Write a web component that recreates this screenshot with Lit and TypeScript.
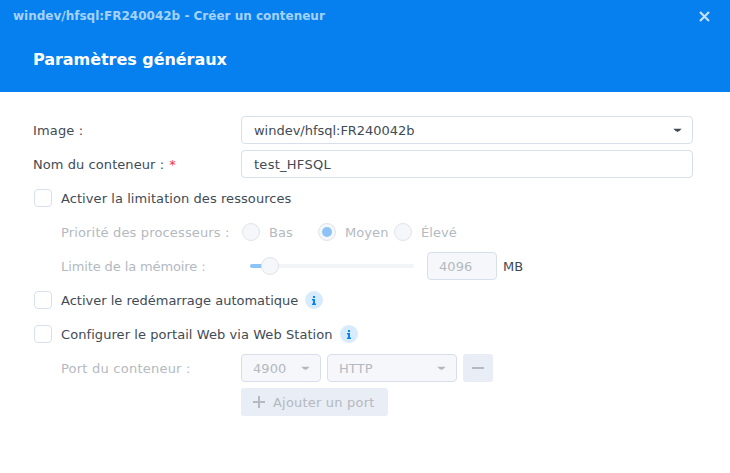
import { LitElement, html, css } from "lit";
import { customElement } from "lit/decorators.js";

const caret = html`<svg class="caret" width="9" height="5" viewBox="0 0 10 6"><path d="M0 1h10L7 4H6L5 5 4 4H3z" fill="currentColor"/></svg>`;
const info = html`<span class="info"><svg width="4" height="9" viewBox="0 0 4 9"><path d="M1 0h2v2H1zM0 3h3v4.500h1V9H0V7.500h1V4.500H0z" fill="#0a84ee"/></svg></span>`;

@customElement("app-root")
export class AppRoot extends LitElement {
  static styles = css`
    :host { display: block; width: 730px; height: 473px; background: #fff; overflow: hidden;
      font-family: "DejaVu Sans", Verdana, sans-serif; font-size: 13px; letter-spacing: 0.07px; color: #414b55; }
    .head { height: 92px; background: #0580ee; box-sizing: border-box; display: flex; flex-direction: column; }
    .bar { height: 32px; display: flex; align-items: center; justify-content: space-between; padding: 0 20px 0 13px; font-size: 12px; letter-spacing: 0; font-weight: 700; color: #a6d2fa; }
    .bar svg { display: block; }
    .title { margin: 12px 0 0 33px; font-size: 16px; line-height: 32px; letter-spacing: -0.05px; font-weight: 700; color: #fff; }
    .body { padding: 24px 37px 0 33px; display: flex; flex-direction: column; gap: 6px; }
    .row { height: 28px; display: flex; align-items: center; }
    .label { width: 208px; flex: none; }
    .sub { width: 180px; margin-left: 28px; flex: none; }
    .dim { color: #b4b9bf; }
    .req { color: #f0323c; margin-left: 5px; }
    .field { box-sizing: border-box; height: 28px; border: 1px solid #d7e0ea; border-radius: 4px; padding: 0 12px; display: flex; align-items: center; justify-content: space-between; background: #fff; }
    .wide { width: 452px; }
    .caret { color: #414b55; display: block; margin-right: -2px; }
    .off { background: #f5f7fa; color: #b4b9bf; padding: 0 11px; }
    .off .caret { color: #b4b9bf; margin-right: -1px; }
    .box { box-sizing: border-box; width: 18px; height: 18px; border: 1px solid #d7e0ea; border-radius: 4px; margin: 0 9px 0 1px; flex: none; }
    .info { width: 18px; height: 18px; border-radius: 50%; background: #d8ebfc; margin-left: 7px; display: flex; align-items: center; justify-content: center; }
    .opts { display: flex; margin-left: 1px; }
    .opt { width: 76px; display: flex; align-items: center; gap: 9px; }
    .radio { box-sizing: border-box; width: 18px; height: 18px; border-radius: 50%; border: 1px solid #dfe4ea; background: #f5f7fa; flex: none; display: flex; align-items: center; justify-content: center; }
    .radio i { width: 10px; height: 10px; border-radius: 50%; background: #8cc4f8; display: block; }
    .slider { width: 164px; margin-left: 9px; height: 4px; border-radius: 2px; background: #f3f4f6; position: relative; flex: none; }
    .slider b { display: block; width: 14px; height: 4px; border-radius: 2px; background: #8cc4f8; }
    .slider i { position: absolute; left: 11px; top: -7px; box-sizing: border-box; width: 18px; height: 18px; border-radius: 50%; border: 1px solid #dfe4ea; background: #f5f7fa; }
    .num { width: 70px; margin-left: 13px; }
    .mb { margin-left: 6px; color: #414b55; }
    .gap6 { margin-left: 6px; }
    .port { width: 80px; }
    .proto { width: 130px; }
    .btn { box-sizing: border-box; height: 28px; background: #e9edf5; border-radius: 3px; color: #b4b9bf; display: flex; align-items: center; flex: none; }
    .minus { width: 30px; margin-left: 6px; justify-content: center; }
    .add { width: 147px; padding-left: 12px; margin-left: 208px; gap: 8px; }
    .add svg, .minus svg { display: block; }
    .ls-n11 { letter-spacing: -0.11px; }
    .ls-n02 { letter-spacing: -0.02px; }
    .ls-0 { letter-spacing: 0; }
    .ls-15 { letter-spacing: 0.15px; }
    .ls-20 { letter-spacing: 0.2px; }
    .ls-23 { letter-spacing: 0.23px; }
    .ls-27 { letter-spacing: 0.27px; }
  `;

  render() {
    return html`
      <div class="head">
        <div class="bar">
          <span>windev/hfsql:FR240042b - Créer un conteneur</span>
          <svg width="11" height="11" viewBox="0 0 11 11"><path d="M1 1l9 9M10 1l-9 9" stroke="#c4e0fb" stroke-width="2.200" fill="none"/></svg>
        </div>
        <div class="title">Paramètres généraux</div>
      </div>
      <div class="body">
        <div class="row"><span class="label ls-15">Image :</span><div class="field wide"><span class="ls-n02">windev/hfsql:FR240042b</span>${caret}</div></div>
        <div class="row"><span class="label">Nom du conteneur :<span class="req">*</span></span><div class="field wide"><span class="ls-27">test_HFSQL</span></div></div>
        <div class="row"><span class="box"></span><span>Activer la limitation des ressources</span></div>
        <div class="row dim"><span class="sub ls-15">Priorité des processeurs :</span>
          <div class="opts">
            <div class="opt"><span class="radio"></span><span>Bas</span></div>
            <div class="opt"><span class="radio"><i></i></span><span>Moyen</span></div>
            <div class="opt"><span class="radio"></span><span>Élevé</span></div>
          </div>
        </div>
        <div class="row dim"><span class="sub ls-n11">Limite de la mémoire :</span>
          <div class="slider"><b></b><i></i></div>
          <div class="field off num"><span>4096</span></div>
          <span class="mb">MB</span>
        </div>
        <div class="row"><span class="box"></span><span class="ls-0">Activer le redémarrage automatique</span>${info}</div>
        <div class="row"><span class="box"></span><span>Configurer le portail Web via Web Station</span>${info}</div>
        <div class="row dim"><span class="sub ls-23">Port du conteneur :</span>
          <div class="field off port"><span>4900</span>${caret}</div>
          <div class="field off proto gap6"><span>HTTP</span>${caret}</div>
          <div class="btn minus"><svg width="12" height="2"><rect width="12" height="2" fill="#b4b9bf"/></svg></div>
        </div>
        <div class="row dim">
          <div class="btn add"><svg width="12" height="12"><path d="M5 0h2v5h5v2H7v5H5V7H0V5h5z" fill="#b4b9bf"/></svg><span class="ls-20">Ajouter un port</span></div>
        </div>
      </div>
    `;
  }
}
